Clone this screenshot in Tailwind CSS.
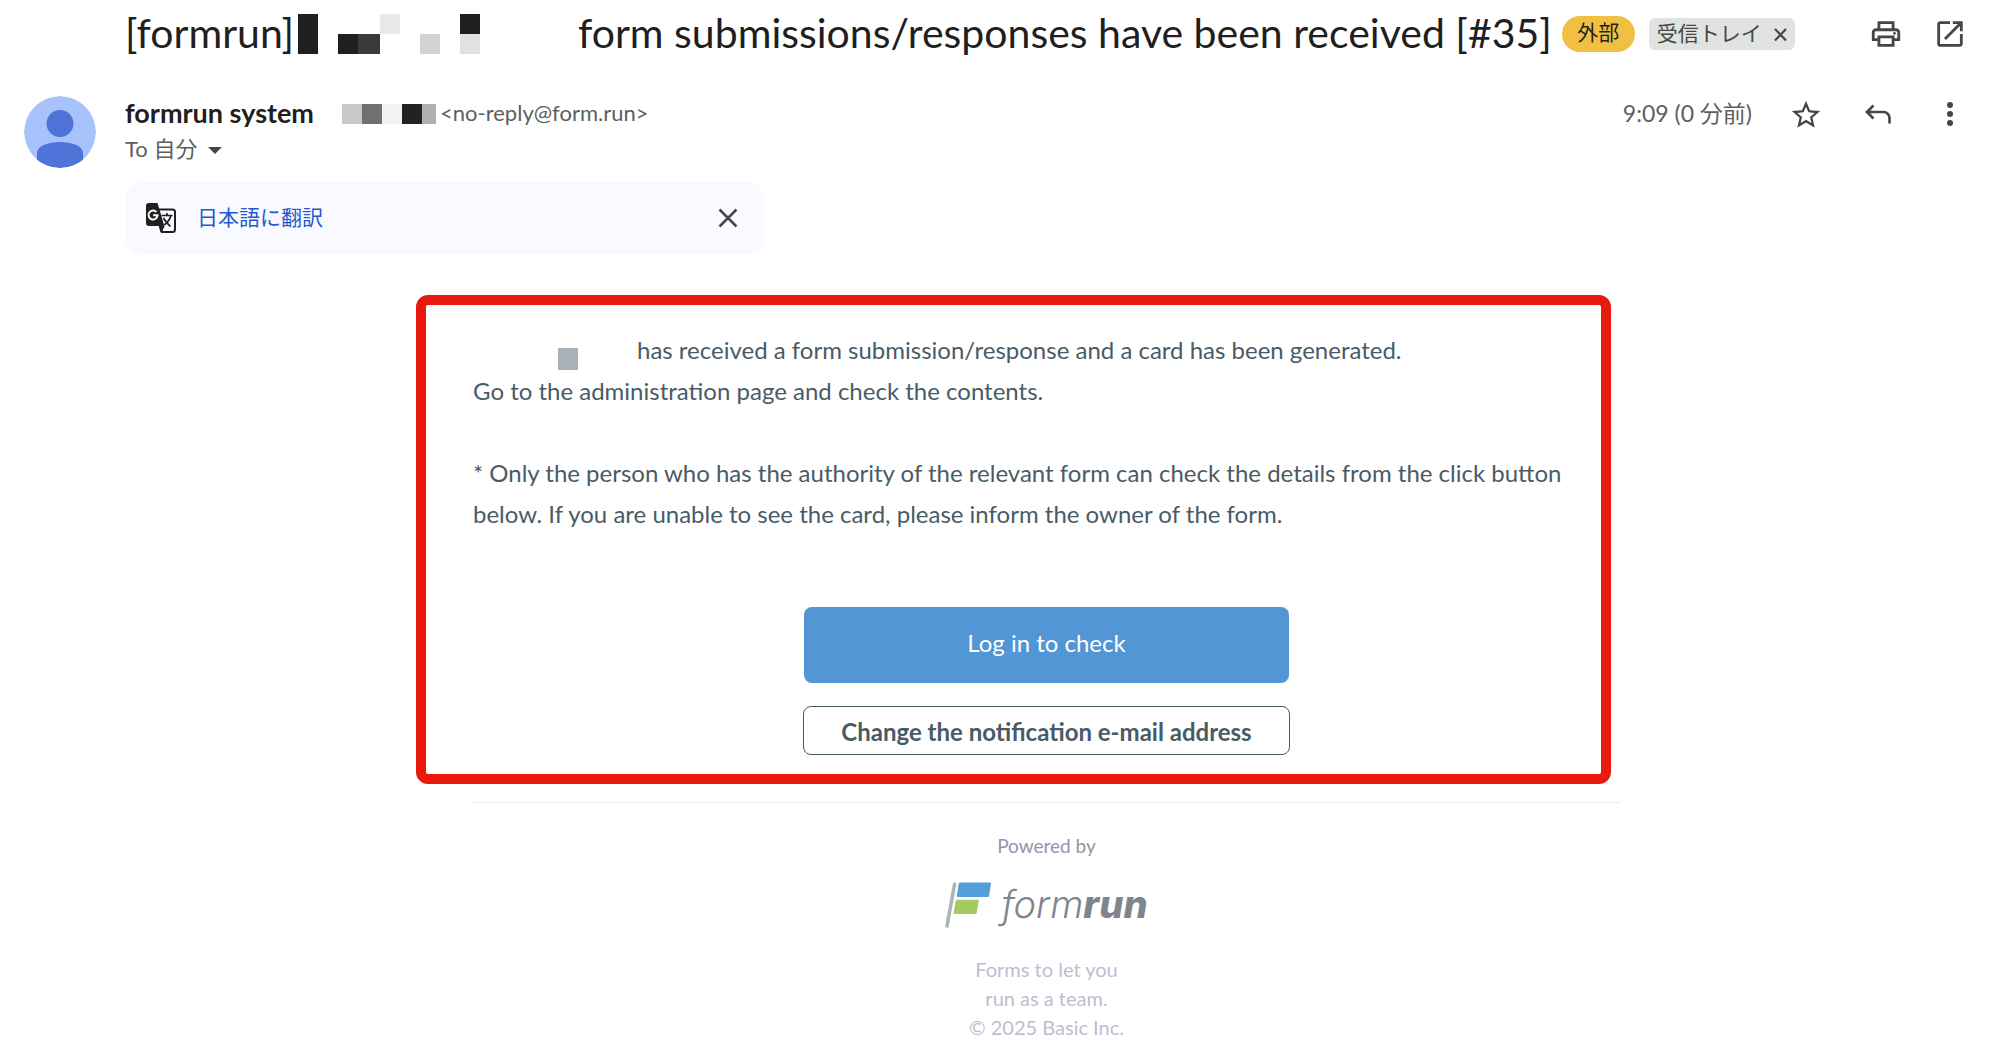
<!DOCTYPE html>
<html lang="ja">
<head>
    <meta charset="UTF-8"/>
    <meta name="viewport" content="width=device-width, initial-scale=1"/>
    <title>form submissions/responses have been received [#35]</title>
    <script src="https://cdn.jsdelivr.net/npm/@tailwindcss/browser@4"></script>
</head>
<body class="bg-white min-h-screen text-[#1f1f1f] font-[Lato,'Noto_Sans_CJK_JP',sans-serif]">
    <header class="flex items-center h-[68px] pl-[125px] pr-[22px]">
        <h1 class="flex items-center text-[41px] leading-[46px] whitespace-nowrap">
            <span class="w-[173px] pb-[2px]">[formrun]</span>
            <svg class="w-[182px] h-10 mr-[98px]" viewBox="0 0 182 40" shape-rendering="crispEdges" aria-hidden="true">
                <path fill="#1f1f1f" d="M0 0h20v40H0zM40 20h20v20H40zM162 0h20v20h-20z"/>
                <path fill="#3a3a3a" d="M60 20h22v20H60z"/>
                <path fill="#e8e8e8" d="M82 0h20v20H82z"/>
                <path fill="#d3d3d3" d="M122 20h20v20h-20z"/>
                <path fill="#e1e1e1" d="M162 20h20v20h-20z"/>
            </svg>
            <span class="pb-[2px]">form submissions/responses have been received [#35]</span>
        </h1>
        <span class="ml-[10px] shrink-0 w-[73px] h-9 rounded-full bg-[#f1bf42] text-center text-[21px] leading-8">外部</span>
        <span class="ml-[14px] shrink-0 flex items-center h-8 rounded-md bg-[#e1e3e1] px-2 text-[21px] leading-8 text-[#444746]">
            <span class="pb-[2px]">受信トレイ</span>
            <button type="button" aria-label="ラベルを削除" class="ml-3">
                <svg class="w-[13px] h-[13px]" viewBox="0 0 13 13" fill="none" stroke="#444746" stroke-width="2.200"><path d="M1 1l11 11.500M12 1L1 12.500"/></svg>
            </button>
        </span>
        <div class="ml-auto flex shrink-0">
            <button type="button" aria-label="印刷" class="w-16 h-12 grid place-items-center">
                <svg class="w-[34px] h-[34px]" viewBox="0 0 24 24" fill="#444746"><path d="M19 8h-1V3H6v5H5c-1.660 0-3 1.340-3 3v6h4v4h12v-4h4v-6c0-1.660-1.340-3-3-3zM8 5h8v3H8V5zm8 12v2H8v-4h8v2zm2-2v-2H6v2H4v-4c0-.55.45-1 1-1h14c.55 0 1 .45 1 1v4h-2z"/><circle cx="18" cy="11.500" r="1"/></svg>
            </button>
            <button type="button" aria-label="新しいウィンドウで開く" class="w-16 h-12 grid place-items-center">
                <svg class="w-[34px] h-[34px]" viewBox="0 0 24 24" fill="#444746"><path d="M19 19H5V5h7V3H5c-1.110 0-2 .9-2 2v14c0 1.100.89 2 2 2h14c1.100 0 2-.9 2-2v-7h-2v7zM14 3v2h3.590l-9.830 9.830 1.410 1.410L19 6.410V10h2V3h-7z"/></svg>
            </button>
        </div>
    </header>
    <main class="flex pt-7">
        <svg class="shrink-0 w-[72px] h-[72px] ml-6 mr-[29px] rounded-full" viewBox="0 0 72 72" aria-hidden="true">
            <circle cx="36" cy="36" r="36" fill="#a8c3fc"/>
            <circle cx="36" cy="27.500" r="13.500" fill="#4f73d9"/>
            <path fill="#4f73d9" d="M13 64V57c0-7 11-11 23-11s23 4 23 11v7c-6 5-14 8-23 8s-17-3-23-8z"/>
        </svg>
        <div class="flex-1 pr-9">
            <div class="flex items-center h-9">
                <span class="w-[217px] text-[27px] leading-8 pb-[2px] font-bold whitespace-nowrap">formrun system</span>
                <svg class="w-[94px] h-5 mr-1" viewBox="0 0 94 20" shape-rendering="crispEdges" aria-hidden="true">
                    <path fill="#c8c8c8" d="M0 0h20v20H0z"/>
                    <path fill="#707070" d="M20 0h20v20H20z"/>
                    <path fill="#f2f2f2" d="M40 0h20v20H40z"/>
                    <path fill="#222222" d="M60 0h20v20H60z"/>
                    <path fill="#b0b0b0" d="M80 0h14v20H80z"/>
                </svg>
                <span class="text-[22px] leading-8 pb-[2px] text-[#5e5e5e]">&lt;no-reply@form.run&gt;</span>
                <time class="ml-auto mr-[18px] text-[23px] leading-8 pb-[2px] text-[#5e5e5e]">9:09 (0 分前)</time>
                <div class="flex -mr-[18px]">
                    <button type="button" aria-label="スター" class="w-[72px] h-9 pt-[2px] grid place-items-center">
                        <svg class="w-[34px] h-[34px]" viewBox="0 0 24 24" fill="#444746"><path d="M22 9.240l-7.190-.62L12 2 9.190 8.630 2 9.240l5.460 4.730L5.820 21 12 17.270 18.180 21l-1.630-7.030L22 9.240zM12 15.400l-3.760 2.270 1-4.280-3.320-2.880 4.380-.38L12 6.100l1.710 4.040 4.380.38-3.320 2.880 1 4.280L12 15.400z"/></svg>
                    </button>
                    <button type="button" aria-label="返信" class="w-[72px] h-9 grid place-items-center">
                        <svg class="w-[26px] h-5" viewBox="0 0 26 20" fill="none" stroke="#444746" stroke-width="2.600"><path d="M8.500 1.500L2 8l6.500 6.500M2 8h16.500a6 6 0 0 1 6 6v5.500"/></svg>
                    </button>
                    <button type="button" aria-label="その他" class="w-[72px] h-9 grid place-items-center">
                        <svg class="w-2 h-6" viewBox="0 0 8 24" fill="#444746"><circle cx="4" cy="3" r="3"/><circle cx="4" cy="12" r="3"/><circle cx="4" cy="21" r="3"/></svg>
                    </button>
                </div>
            </div>
            <button type="button" class="flex items-center gap-[11px] h-9 text-[22px] leading-8 text-[#5e5e5e]">
                <span class="pb-[2px]">To 自分</span>
                <svg class="w-[14px] h-[7px]" viewBox="0 0 14 7" fill="#444746"><path d="M0 0h14L7 7z"/></svg>
            </button>
            <div class="mt-[14px] w-[639px] h-[72px] rounded-2xl bg-[#f9faff] flex items-center pl-5 pr-[26px]">
                <svg class="w-8 h-8" viewBox="0 0 32 32" aria-hidden="true">
                    <path fill="#f9faff" stroke="#1f1f1f" stroke-width="2" d="M13 7.500h14.500a2.500 2.500 0 0 1 2.500 2.500v17.500a2.500 2.500 0 0 1-2.500 2.500H17z"/>
                    <path fill="#1f1f1f" d="M4 1h8.500l1.300 4.500 2.200 7 3.500 12.500-4 5.500-1.800-6.500H4a3 3 0 0 1-3-3V4a3 3 0 0 1 3-3z"/>
                    <path fill="none" stroke="#f9faff" stroke-width="2" d="M11.400 10A4.500 4.500 0 1 0 12.500 13.300H8"/>
                    <path fill="none" stroke="#1f1f1f" stroke-width="1.700" d="M16.500 13.500h11M22 11v2.500M25.800 13.500c-.8 3.500-3.300 7-6.500 9.500M18.500 16c1.500 3 4.500 6 7 8.500"/>
                </svg>
                <a href="#" class="ml-5 text-[21px] leading-8 pb-[2px] text-[#2858d0]">日本語に翻訳</a>
                <button type="button" aria-label="閉じる" class="ml-auto">
                    <svg class="w-5 h-5" viewBox="0 0 20 20" fill="none" stroke="#444746" stroke-width="2.500"><path d="M1.500 1.500l17 17M18.500 1.500l-17 17"/></svg>
                </button>
            </div>
            <div class="relative mx-auto mt-[75px] max-w-[1147px]">
                <div class="absolute -top-[34px] -left-[57px] right-[9px] h-[489px] border-[10px] border-[#e8190d] rounded-xl pointer-events-none"></div>
                <p class="flex text-[24px] leading-[41px] text-[#495b67]">
                    <svg class="w-5 h-[22px] mt-[19px] ml-[85px] mr-[59px]" viewBox="0 0 20 22" aria-hidden="true"><path fill="#a8b1b7" d="M0 0h20v22H0z"/></svg>
                    has received a form submission/response and a card has been generated.
                </p>
                <p class="text-[24px] leading-[41px] text-[#495b67]">
                    Go to the administration page and check the contents.<br/><br/>
                    * Only the person who has the authority of the relevant form can check the details from the click button<br/>
                    below. If you are unable to see the card, please inform the owner of the form.
                </p>
                <div class="mt-[73px] flex flex-col items-center text-[24px]">
                    <a href="#" class="w-[485px] h-[76px] rounded-lg bg-[#5296d6] text-white text-center leading-[72px]">Log in to check</a>
                    <a href="#" class="mt-[23px] w-[487px] h-[49px] rounded-lg border border-[#495b67] text-[#495b67] text-center font-bold leading-[50px]">Change the notification e-mail address</a>
                </div>
                <hr class="mt-[47px] border-[#ebebf7]"/>
                <footer class="pt-7 flex flex-col items-center text-center text-[20px] leading-[29px] text-[#bebdd0]">
                    <span class="text-[19px] text-[#9594ab]">Powered by</span>
                    <a href="#" class="mt-[22px] flex text-[#7f868b] italic text-[38px] leading-[44px] font-[Inter,sans-serif]">
                        <svg class="w-[46px] h-[46px] mr-[10px]" viewBox="0 0 46 46" aria-hidden="true">
                            <path stroke="#adb4b8" stroke-width="3.600" stroke-linecap="round" d="M9.600 2.200L2 44"/>
                            <path fill="#53a0da" stroke="#53a0da" stroke-linejoin="round" d="M14.300 1h31.200l-2 13.500H12.300z"/>
                            <path fill="#a4c963" stroke="#a4c963" stroke-linejoin="round" d="M11.300 18.200h22l-2.300 13.300H9z"/>
                        </svg>
                        <span class="font-light">form</span><span class="font-extrabold">run</span>
                    </a>
                    <p class="mt-[27px]">Forms to let you<br/>run as a team.<br/>© 2025 Basic Inc.</p>
                </footer>
            </div>
        </div>
    </main>
</body>
</html>
